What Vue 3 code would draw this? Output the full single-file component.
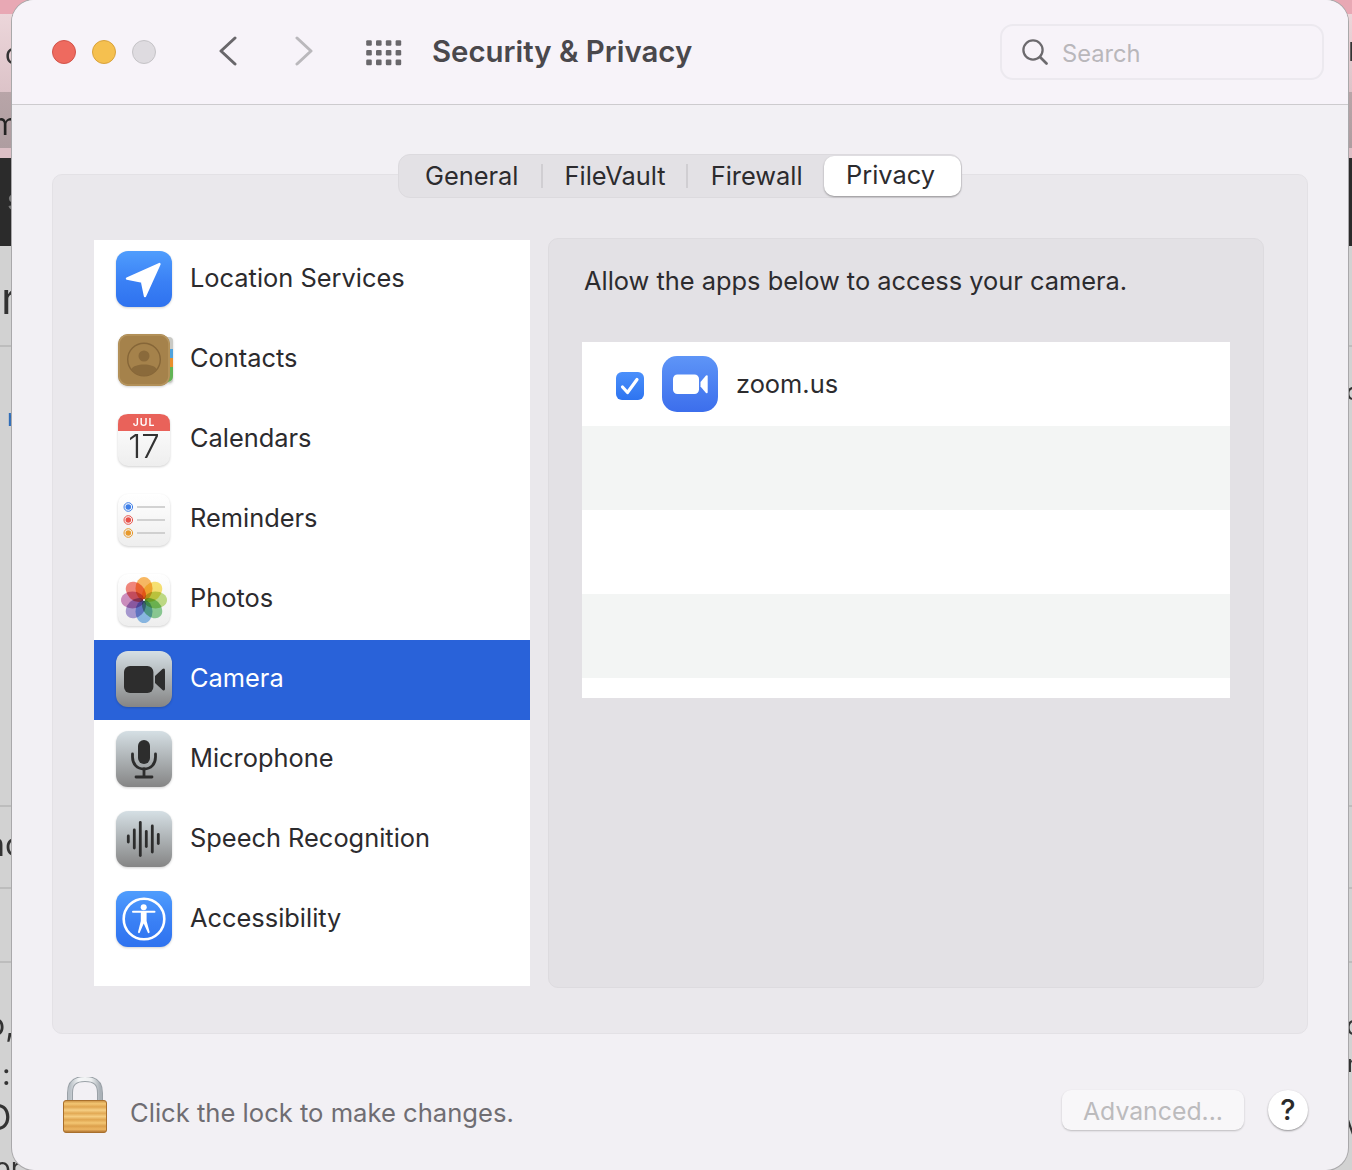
<script setup>
const rows = [
  { name: 'Location Services', icon: 'location' },
  { name: 'Contacts', icon: 'contacts' },
  { name: 'Calendars', icon: 'calendar' },
  { name: 'Reminders', icon: 'reminders' },
  { name: 'Photos', icon: 'photos' },
  { name: 'Camera', icon: 'camera', active: true },
  { name: 'Microphone', icon: 'mic' },
  { name: 'Speech Recognition', icon: 'speech' },
  { name: 'Accessibility', icon: 'access' }
]
const petals = [
  ['#f7a83c', 0], ['#f8dc50', 45], ['#b4d86c', 90], ['#74c67e', 135],
  ['#74b2ea', 180], ['#9a88d0', 225], ['#c777b4', 270], ['#f06a5c', 315]
]
const bars = [[12.3, 9], [18.3, 21], [24.3, 36], [30.3, 18], [36.3, 29], [42.3, 12]]
const dots = []
for (let y = 0; y < 3; y++) for (let x = 0; x < 4; x++) dots.push([x * 9.8 + 3, y * 9.7 + 3])
const fragments = [
  { t: 'c', x: 5, y: 38, s: 28, c: '#333' },
  { t: 'm', x: -8, y: 106, s: 30, c: '#222' },
  { t: 's', x: 7, y: 184, s: 28, c: '#777' },
  { t: 'r', x: 1, y: 272, s: 44, c: '#333' },
  { t: 'r', x: 7, y: 404, s: 24, c: '#2f6db8' },
  { t: 'nc', x: -14, y: 826, s: 32, c: '#333' },
  { t: 'o,', x: -14, y: 1006, s: 32, c: '#333' },
  { t: ':', x: 2, y: 1056, s: 30, c: '#333' },
  { t: 'O', x: -16, y: 1096, s: 36, c: '#333' },
  { t: 'or', x: -6, y: 1152, s: 28, c: '#333' },
  { t: 'I', x: 1348, y: 36, s: 26, c: '#333' },
  { t: 'o', x: 1346, y: 378, s: 24, c: '#333' },
  { t: 'o', x: 1346, y: 1010, s: 26, c: '#333' },
  { t: 'r', x: 1347, y: 1050, s: 24, c: '#333' },
  { t: 'v', x: 1346, y: 1110, s: 26, c: '#333' }
]
</script>

<template>
  <div class="desk">
    <span
      v-for="(f, i) in fragments"
      :key="i"
      class="frag"
      :style="{ left: f.x + 'px', top: f.y + 'px', fontSize: f.s + 'px', color: f.c }"
    >{{ f.t }}</span>

    <main class="window">
      <header class="bar">
        <div class="lights">
          <i class="light red"></i>
          <i class="light yellow"></i>
          <i class="light grey"></i>
        </div>
        <svg class="chev" width="20" height="30" viewBox="0 0 20 30">
          <path d="M17 2 L3 15 L17 28" fill="none" stroke="#69676b" stroke-width="3" stroke-linecap="round" stroke-linejoin="round" />
        </svg>
        <svg class="chev fwd" width="20" height="30" viewBox="0 0 20 30">
          <path d="M3 2 L17 15 L3 28" fill="none" stroke="#bab8bc" stroke-width="3" stroke-linecap="round" stroke-linejoin="round" />
        </svg>
        <svg class="grid" width="38" height="26" viewBox="0 0 38 26">
          <rect v-for="(d, i) in dots" :key="i" :x="d[0] - 2.8" :y="d[1] - 2.8" width="5.6" height="5.6" rx="1.2" fill="#69676b" />
        </svg>
        <h1 class="title">Security &amp; Privacy</h1>
        <div class="search">
          <svg width="26" height="26" viewBox="0 0 26 26">
            <circle cx="11" cy="11" r="9.6" fill="none" stroke="#6c6a6e" stroke-width="2.3" />
            <path d="M18 18 L24.5 24.5" stroke="#6c6a6e" stroke-width="2.7" stroke-linecap="round" />
          </svg>
          <span class="search-text">Search</span>
        </div>
      </header>

      <section class="content">
        <div class="panel">
          <nav class="tabs">
            <span class="tab t1">General</span>
            <i class="sep"></i>
            <span class="tab t2">FileVault</span>
            <i class="sep"></i>
            <span class="tab t3">Firewall</span>
            <span class="tab on">Privacy</span>
          </nav>

          <div class="columns">
            <ul class="list">
              <li v-for="r in rows" :key="r.name" class="row" :class="{ active: r.active }">
                <svg class="icon" width="56" height="56" viewBox="0 0 56 56">
                  <defs>
                    <linearGradient :id="'blue-' + r.icon" x1="0" y1="0" x2="0" y2="1">
                      <stop offset="0" stop-color="#4f9dfd" />
                      <stop offset="0.55" stop-color="#3a80f5" />
                      <stop offset="1" stop-color="#2e72ef" />
                    </linearGradient>
                    <linearGradient :id="'grey-' + r.icon" x1="0" y1="0" x2="0" y2="1">
                      <stop offset="0" stop-color="#d5dfe4" />
                      <stop offset="1" stop-color="#858585" />
                    </linearGradient>
                    <linearGradient :id="'paper-' + r.icon" x1="0" y1="0" x2="0" y2="1">
                      <stop offset="0" stop-color="#ffffff" />
                      <stop offset="1" stop-color="#eeeeee" />
                    </linearGradient>
                  </defs>

                  <template v-if="r.icon === 'location'">
                    <rect width="56" height="56" rx="12" :fill="'url(#blue-' + r.icon + ')'" />
                    <path d="M43.5 13 L11 27.5 L26 30.5 L29 45 Z" fill="#fff" stroke="#fff" stroke-width="2.4" stroke-linejoin="round" />
                  </template>

                  <template v-else-if="r.icon === 'contacts'">
                    <g transform="translate(0 3)">
                      <rect x="48" y="3" width="9" height="46" rx="4" fill="#c9c9c4" />
                      <rect x="52" y="15" width="5" height="9" fill="#4fa3dd" />
                      <rect x="52" y="24" width="5" height="9" fill="#e88f2d" />
                      <path d="M52 33 h5 v9 q0 5 -5 6 z" fill="#62b455" />
                      <rect x="2" y="0" width="52" height="52" rx="10" fill="#a5824b" />
                      <rect x="3" y="1" width="50" height="50" rx="9" fill="none" stroke="#b6955e" stroke-width="1.5" />
                      <circle cx="28" cy="25.5" r="16.3" fill="none" stroke="#866638" stroke-width="1.4" />
                      <circle cx="28" cy="22" r="5.5" fill="#8a6a3b" />
                      <path d="M15.5 35 C18 29 38 29 40.5 35 C36 44 20 44 15.5 35 Z" fill="#8a6a3b" />
                    </g>
                  </template>

                  <template v-else-if="r.icon === 'calendar'">
                    <rect x="2" y="3" width="52" height="52" rx="10" :fill="'url(#paper-' + r.icon + ')'" />
                    <path d="M2 20 V13 Q2 3 12 3 H44 Q54 3 54 13 V20 Z" fill="#e9625a" />
                    <text x="28" y="15" text-anchor="middle" class="cal-m">JUL</text>
                    <text x="28" y="47" text-anchor="middle" class="cal-d">17</text>
                  </template>

                  <template v-else-if="r.icon === 'reminders'">
                    <rect x="2" y="3" width="52" height="52" rx="10" :fill="'url(#paper-' + r.icon + ')'" />
                    <g fill="none" stroke-width="1">
                      <circle cx="12.3" cy="16" r="4.3" stroke="#3f7fe8" />
                      <circle cx="12.3" cy="29" r="4.3" stroke="#e8524a" />
                      <circle cx="12.3" cy="42" r="4.3" stroke="#e89a2d" />
                    </g>
                    <circle cx="12.3" cy="16" r="2.8" fill="#3f7fe8" />
                    <circle cx="12.3" cy="29" r="2.8" fill="#e8524a" />
                    <circle cx="12.3" cy="42" r="2.8" fill="#e89a2d" />
                    <g stroke="#c5c5c5" stroke-width="1.3">
                      <path d="M21 16 H49 M21 29 H49 M21 42 H49" />
                    </g>
                  </template>

                  <template v-else-if="r.icon === 'photos'">
                    <rect x="2" y="3" width="52" height="52" rx="10" :fill="'url(#paper-' + r.icon + ')'" />
                    <ellipse
                      v-for="p in petals"
                      :key="p[1]"
                      class="petal"
                      cx="28" cy="17.5" rx="8.5" ry="11.5"
                      :fill="p[0]"
                      fill-opacity="0.8"
                      :transform="'rotate(' + p[1] + ' 28 29)'"
                    />
                    <circle cx="28" cy="29" r="1" fill="#fff" />
                  </template>

                  <template v-else-if="r.icon === 'camera'">
                    <rect width="56" height="56" rx="12" :fill="'url(#grey-' + r.icon + ')'" />
                    <rect x="8" y="15" width="29.4" height="27" rx="6" fill="#2d2d2d" />
                    <path d="M39 25 L46.5 18 Q49 16.5 49 19.5 V37.5 Q49 40.5 46.5 39 L39 32 Z" fill="#2d2d2d" />
                  </template>

                  <template v-else-if="r.icon === 'mic'">
                    <rect width="56" height="56" rx="12" :fill="'url(#grey-' + r.icon + ')'" />
                    <rect x="22" y="9" width="12" height="24" rx="6" fill="#2d2d2d" />
                    <path d="M16.5 23 V26 C16.5 33 21 38 28 38 C35 38 39.5 33 39.5 26 V23" fill="none" stroke="#2d2d2d" stroke-width="2.8" stroke-linecap="round" />
                    <path d="M28 38 V45 M20 46 H36" stroke="#2d2d2d" stroke-width="2.8" stroke-linecap="round" />
                  </template>

                  <template v-else-if="r.icon === 'speech'">
                    <rect width="56" height="56" rx="12" :fill="'url(#grey-' + r.icon + ')'" />
                    <rect
                      v-for="b in bars"
                      :key="b[0]"
                      :x="b[0] - 1.4" :y="28 - b[1] / 2"
                      width="2.8" :height="b[1]" rx="1.4"
                      fill="#2d2d2d"
                    />
                  </template>

                  <template v-else-if="r.icon === 'access'">
                    <rect width="56" height="56" rx="12" :fill="'url(#blue-' + r.icon + ')'" />
                    <circle cx="28" cy="28" r="20.3" fill="none" stroke="#fff" stroke-width="2.6" />
                    <circle cx="27.7" cy="16.3" r="3" fill="#fff" />
                    <path d="M17 20.8 L38.5 20.8" stroke="#fff" stroke-width="2" stroke-linecap="round" />
                    <path d="M24.8 21 H30.6 V30 L33.6 41 Q33.6 42.6 32 42 L27.7 32.5 L23.6 42 Q22 42.6 22 41 L24.8 30 Z" fill="#fff" />
                  </template>
                </svg>
                <span class="label">{{ r.name }}</span>
              </li>
            </ul>

            <div class="detail">
              <p class="prompt">Allow the apps below to access your camera.</p>
              <div class="table">
                <div class="app">
                  <svg class="check" width="28" height="28" viewBox="0 0 28 28">
                    <defs>
                      <linearGradient id="chk" x1="0" y1="0" x2="0" y2="1">
                        <stop offset="0" stop-color="#4b90fb" />
                        <stop offset="1" stop-color="#2e74f0" />
                      </linearGradient>
                    </defs>
                    <rect width="28" height="28" rx="6" fill="url(#chk)" />
                    <path d="M6.5 15 L11.5 20.5 L21 7.5" fill="none" stroke="#fff" stroke-width="3.2" stroke-linecap="round" stroke-linejoin="round" />
                  </svg>
                  <svg width="56" height="56" viewBox="0 0 56 56">
                    <defs>
                      <linearGradient id="zm" x1="0" y1="0" x2="0" y2="1">
                        <stop offset="0" stop-color="#5e95f7" />
                        <stop offset="1" stop-color="#3c6eec" />
                      </linearGradient>
                    </defs>
                    <rect width="56" height="56" rx="15" fill="url(#zm)" />
                    <rect x="11" y="18.5" width="26" height="19.5" rx="4.5" fill="#fff" />
                    <path d="M38.5 26 L44 19.5 Q45.7 18.5 45.7 20.5 V36 Q45.7 38 44 37 L38.5 30.5 Z" fill="#fff" />
                  </svg>
                  <span class="app-name">zoom.us</span>
                </div>
                <div class="stripe alt"></div>
                <div class="stripe"></div>
                <div class="stripe alt"></div>
              </div>
            </div>
          </div>
        </div>

        <footer class="foot">
          <svg class="lock" width="44" height="56" viewBox="0 0 44 56">
            <defs>
              <linearGradient id="shk" x1="0" y1="0" x2="1" y2="0">
                <stop offset="0" stop-color="#b9c0c6" />
                <stop offset="0.3" stop-color="#f4f6f7" />
                <stop offset="0.7" stop-color="#eef0f1" />
                <stop offset="1" stop-color="#aab1b7" />
              </linearGradient>
              <linearGradient id="gld" x1="0" y1="0" x2="0" y2="1">
                <stop offset="0" stop-color="#c98f42" />
                <stop offset="0.1" stop-color="#f3c673" />
                <stop offset="0.2" stop-color="#e0a550" />
                <stop offset="0.3" stop-color="#f6cf85" />
                <stop offset="0.4" stop-color="#e2a954" />
                <stop offset="0.5" stop-color="#f5cc80" />
                <stop offset="0.6" stop-color="#e0a550" />
                <stop offset="0.7" stop-color="#f3c673" />
                <stop offset="0.8" stop-color="#dca04c" />
                <stop offset="0.9" stop-color="#edb662" />
                <stop offset="1" stop-color="#a96d2c" />
              </linearGradient>
            </defs>
            <path d="M7 24 V16 C7 6 12 2 22 2 C32 2 37 6 37 16 V24" fill="none" stroke="#9aa1a7" stroke-width="6" />
            <path d="M7 24 V16 C7 6 12 2 22 2 C32 2 37 6 37 16 V24" fill="none" stroke="url(#shk)" stroke-width="4" />
            <rect x="0.5" y="23.5" width="43" height="32" rx="2.5" fill="url(#gld)" stroke="#a86f2c" stroke-width="1" />
          </svg>
          <span class="hint">Click the lock to make changes.</span>
          <span class="advanced">Advanced...</span>
          <span class="help">?</span>
        </footer>
      </section>
    </main>
  </div>
</template>

<style>
html, body { margin: 0; background: #cfcfcf; }
</style>

<style scoped>
.desk {
  position: relative;
  width: 1352px;
  height: 1170px;
  overflow: hidden;
  padding: 0 4px 0 12px;
  box-sizing: border-box;
  font-family: Inter, "Liberation Sans", sans-serif;
  background:
    linear-gradient(#bdbdbd, #bdbdbd) 0 345px / 100% 2px no-repeat,
    linear-gradient(#bdbdbd, #bdbdbd) 0 805px / 100% 2px no-repeat,
    linear-gradient(#bdbdbd, #bdbdbd) 0 887px / 100% 2px no-repeat,
    linear-gradient(#bdbdbd, #bdbdbd) 0 961px / 100% 2px no-repeat,
    linear-gradient(
      #e8a8b4 0, #e8a8b4 14px,
      #ecd6da 14px, #dcc3c8 92px,
      #b8a5a8 92px, #ae9da0 148px,
      #dcbfc5 148px, #dcbfc5 158px,
      #2b2b2b 158px, #2b2b2b 246px,
      #d2d2d2 246px, #d2d2d2 100%
    );
}
.frag {
  position: absolute;
  line-height: 1.2;
  filter: blur(0.5px);
}
.window {
  position: relative;
  height: 1170px;
  border-radius: 22px;
  overflow: hidden;
  background: #f2f0f4;
  box-shadow: 0 0 0 1px #a9a8aa;
  display: flex;
  flex-direction: column;
}
.bar {
  height: 104px;
  flex: none;
  display: flex;
  align-items: center;
  background: #f7f3f9;
  border-bottom: 1px solid #cdcbce;
  padding: 0 24px 0 40px;
}
.lights { display: flex; gap: 16px; }
.light {
  width: 24px;
  height: 24px;
  border-radius: 50%;
  box-sizing: border-box;
  display: block;
}
.red { background: #ee6a5f; border: 1px solid #d2534a; }
.yellow { background: #f5c04f; border: 1px solid #d9a23c; }
.grey { background: #dedbe0; border: 1px solid #c5c3c7; }
.chev { margin-left: 62px; margin-top: -2px; }
.chev.fwd { margin-left: 56px; }
.grid { margin-left: 52px; margin-top: 2px; }
.title {
  margin: -2px 0 0 28px;
  font-size: 29.4px;
  font-weight: 600;
  color: #4a484c;
  white-space: nowrap;
}
.search {
  margin-left: auto;
  width: 324px;
  height: 56px;
  box-sizing: border-box;
  border: 2px solid #ece9ef;
  border-radius: 13px;
  display: flex;
  align-items: center;
  padding-left: 20px;
  gap: 14px;
  color: #b9b7bb;
  font-size: 23.7px;
}
.search-text { margin-top: 2px; }
.content {
  flex: 1;
  padding: 69px 40px 0;
  display: flex;
  flex-direction: column;
}
.panel {
  height: 860px;
  box-sizing: border-box;
  background: #eae8ec;
  border: 1px solid #e3e1e5;
  border-radius: 10px;
  display: flex;
  flex-direction: column;
}
.tabs {
  align-self: center;
  margin-top: -21px;
  height: 44px;
  width: 564px;
  box-sizing: border-box;
  background: #e3e1e5;
  border: 1px solid #dcdade;
  border-radius: 12px;
  display: flex;
  align-items: center;
  color: #2c2b2e;
  font-size: 25.4px;
}
.tab { white-space: nowrap; margin-top: -2px; }
.t1 { margin-left: 26px; }
.sep { width: 2px; height: 24px; background: #d0ced2; display: block; }
.t1 + .sep { margin-left: 22px; }
.t2 { margin-left: 22px; }
.t2 + .sep { margin-left: 20px; }
.t3 { margin-left: 23px; }
.on {
  margin-left: auto;
  margin-top: 0;
  width: 137px;
  height: 40px;
  line-height: 38px;
  box-sizing: border-box;
  padding-right: 4px;
  text-align: center;
  background: #fff;
  border-radius: 10px;
  box-shadow: 0 1px 2px rgba(0, 0, 0, 0.35);
}
.columns {
  display: flex;
  margin-top: 40px;
  padding-left: 41px;
  gap: 18px;
  align-items: flex-start;
}
.list {
  list-style: none;
  margin: 2px 0 0;
  padding: 0;
  width: 436px;
  height: 746px;
  background: #fff;
  flex: none;
}
.row {
  height: 80px;
  display: flex;
  align-items: flex-start;
  padding: 11px 0 0 22px;
  box-sizing: border-box;
  gap: 18px;
  color: #2c2b2e;
  font-size: 25.4px;
}
.row .label { line-height: 54px; white-space: nowrap; }
.row.active { background: #2962d9; color: #fff; }
.icon { flex: none; overflow: visible; filter: drop-shadow(0 1px 1px rgba(0, 0, 0, 0.18)); }
.petal { mix-blend-mode: multiply; }
.cal-m { font-size: 10.5px; font-weight: 600; fill: #fff; letter-spacing: 1px; font-family: Inter, sans-serif; }
.cal-d { font-size: 33px; font-weight: 300; fill: #333; font-family: Inter, sans-serif; }
.detail {
  width: 716px;
  height: 750px;
  box-sizing: border-box;
  flex: none;
  background: #e3e1e5;
  border: 1px solid #dddbdf;
  border-radius: 10px;
  padding-left: 33px;
}
.prompt {
  margin: 25px 0 0 2px;
  font-size: 25.4px;
  line-height: 34px;
  color: #2c2b2e;
  white-space: nowrap;
}
.table {
  margin-top: 44px;
  width: 648px;
  height: 356px;
  background: #fff;
}
.app {
  height: 84px;
  display: flex;
  align-items: center;
  padding-left: 34px;
  color: #2c2b2e;
  font-size: 25.4px;
}
.app-name { margin-left: 18px; margin-top: -2px; }
.check { margin-right: 18px; margin-top: 4px; }
.stripe { height: 84px; }
.stripe.alt { background: #f3f5f4; }
.foot {
  flex: 1;
  display: flex;
  align-items: center;
  position: relative;
}
.lock { margin-left: 11px; margin-top: 6px; }
.hint {
  margin-left: 23px;
  margin-top: 20px;
  font-size: 25.6px;
  color: #6f6d72;
}
.advanced {
  margin-left: auto;
  margin-top: 16px;
  width: 182px;
  height: 40px;
  line-height: 42px;
  text-align: center;
  font-size: 24.8px;
  color: #bcbbbd;
  background: #f8f7f9;
  border-radius: 9px;
  box-shadow: 0 1px 2px rgba(0, 0, 0, 0.22);
}
.help {
  margin-left: 24px;
  margin-top: 16px;
  width: 40px;
  height: 40px;
  line-height: 40px;
  text-align: center;
  border-radius: 50%;
  background: #fff;
  box-shadow: 0 1px 2px rgba(0, 0, 0, 0.4);
  font-size: 29px;
  font-weight: 500;
  color: #2a2a2a;
}
</style>
